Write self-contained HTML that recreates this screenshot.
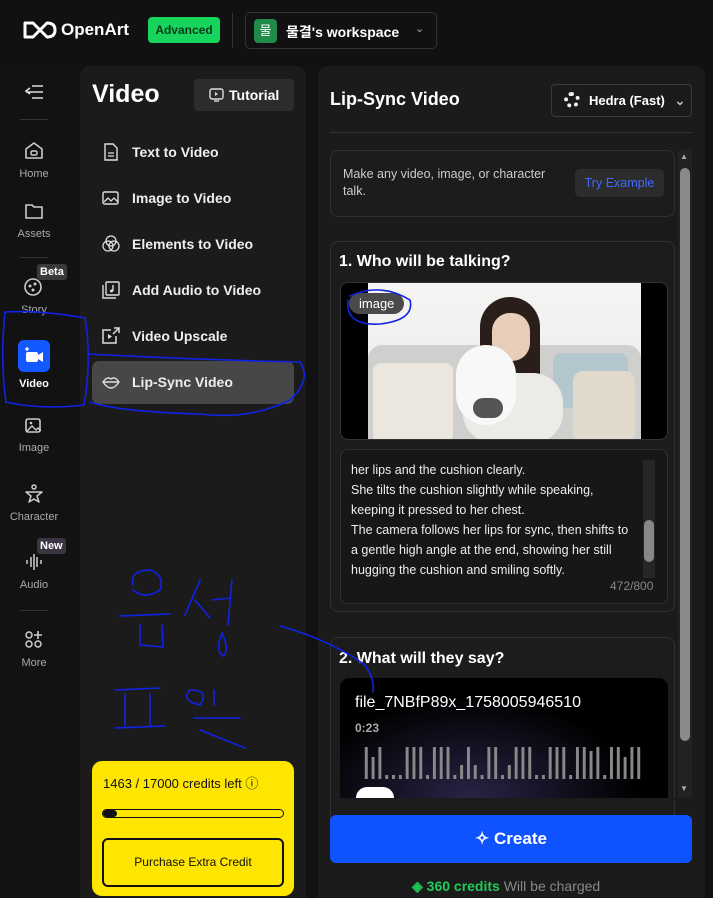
<!DOCTYPE html>
<html><head><meta charset="utf-8"><style>
*{box-sizing:border-box;margin:0;padding:0}
body{width:713px;height:898px;background:#111;font-family:"Liberation Sans","Noto Sans CJK KR",sans-serif;color:#fff;position:relative;overflow:hidden}
.abs{position:absolute}
.side{left:0;top:66px;width:80px;height:832px;background:#121212}
.nav{position:absolute;left:0;width:68px;text-align:center;font-size:11px;color:#aaa}
.nav svg{display:block;margin:0 auto 6px}
.menu{left:80px;top:66px;width:226px;height:832px;background:#1b1b1b;border-radius:10px 10px 0 0}
.mi{position:absolute;left:22px;font-size:14px;font-weight:bold;color:#eee;display:flex;align-items:center;gap:12px}
.right{left:318px;top:66px;width:387px;height:832px;background:#1b1b1b;border-radius:10px 10px 0 0}
.card{position:absolute;border:1px solid #303030;border-radius:8px;background:#1c1c1c}
</style></head><body>
<!-- top bar -->
<svg class="abs" style="left:23px;top:20px" width="34" height="20" viewBox="0 0 34 20"><path d="M2 3 L10 3 Q17 10 24 17 Q32 17 32 10 Q32 3 24 3 Q17 10 10 17 L2 17 Z" fill="none" stroke="#fff" stroke-width="3" stroke-linejoin="round"/></svg>
<div class="abs" style="left:61px;top:20px;font-size:17px;font-weight:bold">OpenArt</div>
<div class="abs" style="left:148px;top:17px;width:72px;height:26px;border-radius:4px;color:#0b3a1a;font-size:12px;font-weight:bold;text-align:center;line-height:26px;background:#17d45c">Advanced</div>
<div class="abs" style="left:232px;top:13px;width:1px;height:35px;background:#333"></div>
<div class="abs" style="left:245px;top:12px;width:192px;height:37px;border:1px solid #333;border-radius:5px"></div>
<div class="abs" style="left:254px;top:19px;width:23px;height:24px;background:#1f8a4a;border-radius:4px;font-size:13px;text-align:center;line-height:24px">물</div>
<div class="abs" style="left:286px;top:22px;font-size:14px;font-weight:bold">물결's workspace</div>
<div class="abs" style="left:415px;top:22px;font-size:11px;color:#aaa">⌄</div>

<!-- sidebar -->
<div class="abs side"></div>
<svg class="abs" style="left:24px;top:84px" width="20" height="16"><path d="M8 2h11M2 8h17M8 14h11M6 4 2 7 6 10" stroke="#ddd" stroke-width="1.6" fill="none"/></svg>
<div class="abs" style="left:20px;top:119px;width:28px;height:1px;background:#333"></div>
<div class="nav" style="top:140px"><svg width="22" height="22" viewBox="0 0 22 22"><path d="M3 9 11 3 19 9V18H3Z" fill="none" stroke="#ccc" stroke-width="1.6" stroke-linejoin="round"/><rect x="8" y="11" width="6" height="4" rx="1.5" fill="none" stroke="#ccc" stroke-width="1.5"/></svg>Home</div>
<div class="nav" style="top:200px"><svg width="22" height="22" viewBox="0 0 22 22"><path d="M3 5h6l2 2h8v11H3Z" fill="none" stroke="#ccc" stroke-width="1.6" stroke-linejoin="round"/></svg>Assets</div>
<div class="abs" style="left:20px;top:257px;width:28px;height:1px;background:#333"></div>
<div class="nav" style="top:276px"><svg width="22" height="22"><circle cx="10" cy="11" r="8" fill="none" stroke="#ccc" stroke-width="1.6"/><circle cx="7" cy="10" r="1.5" fill="#ccc"/><circle cx="12" cy="8" r="1.5" fill="#ccc"/><circle cx="10" cy="14" r="1.5" fill="#ccc"/></svg>Story</div>
<div class="abs" style="left:37px;top:264px;background:#3a3a3a;border-radius:3px;font-size:11px;font-weight:bold;padding:2px 3px">Beta</div>
<div class="abs" style="left:18px;top:340px;width:32px;height:32px;background:#1458ff;border-radius:6px"></div>
<svg class="abs" style="left:23px;top:346px" width="22" height="20"><rect x="3" y="6" width="12" height="10" rx="2" fill="#fff"/><path d="M15 9l5-3v10l-5-3z" fill="#fff"/><path d="M4 1v4M2 3h4" stroke="#fff" stroke-width="1.3"/></svg>
<div class="nav" style="top:378px;color:#fff;font-weight:bold">Video</div>
<div class="nav" style="top:414px"><svg width="22" height="22"><rect x="3" y="5" width="14" height="13" rx="2" fill="none" stroke="#ccc" stroke-width="1.6"/><path d="M4 17l5-5 4 4 2-2 3 3" fill="none" stroke="#ccc" stroke-width="1.4"/><circle cx="8" cy="9" r="1.3" fill="#ccc"/></svg>Image</div>
<div class="nav" style="top:483px"><svg width="22" height="22"><circle cx="11" cy="4" r="2" fill="none" stroke="#ccc" stroke-width="1.5"/><path d="M3 9h16l-5 4 2 6-5-3-5 3 2-6z" fill="none" stroke="#ccc" stroke-width="1.5" stroke-linejoin="round"/></svg>Character</div>
<div class="nav" style="top:551px"><svg width="22" height="22"><path d="M4 9v4M8 6v10M11 3v16M14 6v10M18 9v4" stroke="#ccc" stroke-width="1.5"/></svg>Audio</div>
<div class="abs" style="left:37px;top:538px;background:#3a3440;border-radius:3px;font-size:11px;font-weight:bold;padding:2px 3px">New</div>
<div class="abs" style="left:20px;top:610px;width:28px;height:1px;background:#333"></div>
<div class="nav" style="top:629px"><svg width="22" height="22"><circle cx="6" cy="6" r="3" fill="none" stroke="#ccc" stroke-width="1.5"/><circle cx="6" cy="15" r="3" fill="none" stroke="#ccc" stroke-width="1.5"/><circle cx="15" cy="15" r="3" fill="none" stroke="#ccc" stroke-width="1.5"/><path d="M15 2v8M11 6h8" stroke="#ccc" stroke-width="1.6"/></svg>More</div>

<!-- menu -->
<div class="abs menu"></div>
<div class="abs" style="left:92px;top:80px;font-size:25px;font-weight:bold">Video</div>
<div class="abs" style="left:194px;top:79px;width:100px;height:32px;background:#2c2c2c;border-radius:4px;font-size:14px;font-weight:bold;line-height:32px;padding-left:35px">Tutorial</div>
<svg class="abs" style="left:209px;top:88px" width="15" height="14"><rect x="1" y="1" width="13" height="10" rx="2" fill="none" stroke="#ddd" stroke-width="1.4"/><path d="M6 4l3 2-3 2z" fill="#ddd"/><path d="M5 13h5" stroke="#ddd" stroke-width="1.4"/></svg>
<div class="mi" style="left:102px;top:143px"><svg width="18" height="18"><path d="M3 1h8l4 4v12H3z" fill="none" stroke="#ddd" stroke-width="1.4"/><path d="M6 10h6M6 13h6" stroke="#ddd" stroke-width="1.3"/></svg>Text to Video</div>
<div class="mi" style="left:102px;top:189px"><svg width="18" height="18"><rect x="1" y="3" width="15" height="12" rx="1.5" fill="none" stroke="#ddd" stroke-width="1.4"/><path d="M2 13l4-4 3 3 3-3 4 4" fill="none" stroke="#ddd" stroke-width="1.3"/></svg>Image to Video</div>
<div class="mi" style="left:102px;top:235px"><svg width="18" height="18"><circle cx="9" cy="6" r="5" fill="none" stroke="#ddd" stroke-width="1.3"/><circle cx="6" cy="11" r="5" fill="none" stroke="#ddd" stroke-width="1.3"/><circle cx="12" cy="11" r="5" fill="none" stroke="#ddd" stroke-width="1.3"/></svg>Elements to Video</div>
<div class="mi" style="left:102px;top:281px"><svg width="18" height="18"><rect x="4" y="1" width="13" height="13" rx="1" fill="none" stroke="#ddd" stroke-width="1.4"/><path d="M1 4v13h13" fill="none" stroke="#ddd" stroke-width="1.4"/><path d="M11 4v6" stroke="#ddd" stroke-width="1.4"/><circle cx="9.5" cy="10" r="1.5" fill="#ddd"/></svg>Add Audio to Video</div>
<div class="mi" style="left:102px;top:327px"><svg width="18" height="18"><path d="M14 9v7H1V3h8" fill="none" stroke="#ddd" stroke-width="1.5"/><path d="M12 1h5v5M17 1l-6 6" fill="none" stroke="#ddd" stroke-width="1.5"/><path d="M6 7l4 2.5-4 2.5z" fill="#ddd"/></svg>Video Upscale</div>
<div class="abs" style="left:92px;top:361px;width:202px;height:43px;background:#474747;border-radius:7px"></div>
<div class="mi" style="left:102px;top:373px"><svg width="18" height="18"><path d="M1 9Q5 3 9 6Q13 3 17 9Q13 15 9 15Q5 15 1 9Z M2 9h14" fill="none" stroke="#ddd" stroke-width="1.4"/></svg>Lip-Sync Video</div>
<div class="abs" style="left:92px;top:761px;width:202px;height:135px;background:#ffe600;border-radius:10px"></div>
<div class="abs" style="left:103px;top:773px;font-size:13px;color:#111">1463 / 17000 credits left ⓘ</div>
<div class="abs" style="left:102px;top:809px;width:182px;height:9px;border:1px solid #111;border-radius:5px"><div style="width:14px;height:7px;background:#111;border-radius:4px"></div></div>
<div class="abs" style="left:102px;top:838px;width:182px;height:49px;border:2px solid #111;border-radius:6px;color:#111;font-size:12px;text-align:center;line-height:45px">Purchase Extra Credit</div>

<!-- right panel -->
<div class="abs right"></div>
<div class="abs" style="left:330px;top:89px;font-size:18px;font-weight:bold">Lip-Sync Video</div>
<div class="abs" style="left:551px;top:84px;width:141px;height:33px;border:1px solid #3a3a3a;border-radius:4px;font-size:13px;font-weight:bold;line-height:31px;padding-left:37px">Hedra (Fast) <span style="color:#bbb;margin-left:6px">⌄</span></div>
<div class="abs" style="left:564px;top:92px;width:16px;height:16px;border-radius:50%;border:4px dotted #eee"></div>
<div class="abs" style="left:330px;top:132px;width:362px;height:1px;background:#333"></div>
<div class="card" style="left:330px;top:150px;width:345px;height:67px"></div>
<div class="abs" style="left:343px;top:166px;font-size:12.5px;color:#ccc;line-height:17px;width:208px">Make any video, image, or character talk.</div>
<div class="abs" style="left:575px;top:169px;width:89px;height:28px;background:#2c2c2c;border-radius:5px;color:#3e6bff;font-size:12.5px;line-height:28px;text-align:center">Try Example</div>
<div class="card" style="left:330px;top:241px;width:345px;height:371px"></div>
<div class="abs" style="left:339px;top:253px;font-size:16px;font-weight:bold">1. Who will be talking?</div>
<div class="abs" style="left:340px;top:282px;width:328px;height:158px;background:#000;border-radius:8px;overflow:hidden;border:1px solid #333">
 <div style="position:absolute;left:27px;top:0;width:273px;height:158px;background:linear-gradient(#f4f4f2,#ebebea)">
  <div style="position:absolute;left:0;top:62px;width:273px;height:100px;background:#cfd0ce;border-radius:14px 14px 0 0"></div>
  <div style="position:absolute;left:5px;top:80px;width:80px;height:80px;background:#ece7de;border-radius:8px"></div>
  <div style="position:absolute;left:185px;top:70px;width:75px;height:55px;background:#b4c7ce;border-radius:8px"></div>
  <div style="position:absolute;left:205px;top:88px;width:62px;height:72px;background:#e2d9cd;border-radius:10px"></div>
  <div style="position:absolute;left:112px;top:14px;width:60px;height:110px;background:#2a1e1a;border-radius:30px 30px 10px 10px"></div>
  <div style="position:absolute;left:124px;top:30px;width:38px;height:48px;background:#e8cdb9;border-radius:18px"></div>
  <div style="position:absolute;left:95px;top:90px;width:100px;height:70px;background:#ecebe8;border-radius:30px"></div>
  <div style="position:absolute;left:88px;top:62px;width:60px;height:80px;background:#f8f8f8;border-radius:30px"></div>
  <div style="position:absolute;left:105px;top:115px;width:30px;height:20px;background:#555;border-radius:12px"></div>
 </div>
 <div style="position:absolute;left:8px;top:10px;background:#4a4a4a;border-radius:12px;font-size:13px;padding:3px 10px">image</div>
</div>
<div class="card" style="left:340px;top:449px;width:328px;height:155px;background:#171717"></div>
<div class="abs" style="left:351px;top:460px;font-size:12.5px;line-height:20px;color:#eee;width:300px">her lips and the cushion clearly.<br>She tilts the cushion slightly while speaking,<br>keeping it pressed to her chest.<br>The camera follows her lips for sync, then shifts to<br>a gentle high angle at the end, showing her still<br>hugging the cushion and smiling softly.</div>
<div class="abs" style="left:643px;top:460px;width:12px;height:118px;background:#262626"></div>
<div class="abs" style="left:644px;top:520px;width:10px;height:42px;background:#888;border-radius:5px"></div>
<div class="abs" style="left:610px;top:579px;font-size:12px;color:#888">472/800</div>
<div class="card" style="left:330px;top:637px;width:345px;height:200px"></div>
<div class="abs" style="left:339px;top:650px;font-size:16px;font-weight:bold">2. What will they say?</div>
<div class="abs" style="left:340px;top:678px;width:328px;height:120px;background:radial-gradient(ellipse at 40% 100%,#2a2346,#000 60%);border-radius:10px 10px 0 0"></div>
<div class="abs" style="left:355px;top:694px;font-size:16px">file_7NBfP89x_1758005946510</div>
<div class="abs" style="left:355px;top:721px;font-size:12px;color:#aaa;font-weight:bold">0:23</div>
<svg class="abs" style="left:364px;top:745px" width="277" height="34" viewBox="0 0 244 34" preserveAspectRatio="none"><g stroke="#888" stroke-width="2.6">
<path d="M2 2v32M8 12v22M14 2v32M20 30v4M26 30v4M32 30v4M38 2v32M44 2v32M50 2v32M56 30v4M62 2v32M68 2v32M74 2v32M80 30v4M86 20v14M92 2v32M98 20v14M104 30v4M110 2v32M116 2v32M122 30v4M128 20v14M134 2v32M140 2v32M146 2v32M152 30v4M158 30v4M164 2v32M170 2v32M176 2v32M182 30v4M188 2v32M194 2v32M200 6v28M206 2v32M212 30v4M218 2v32M224 2v32M230 12v22M236 2v32M242 2v32"/></g></svg>
<div class="abs" style="left:356px;top:787px;width:38px;height:11px;background:#fff;border-radius:19px 19px 0 0"></div>
<div class="abs" style="left:342px;top:798px;width:350px;height:3px;background:#1b1b1b"></div>
<!-- outer scrollbar -->
<div class="abs" style="left:678px;top:150px;width:14px;height:648px;background:#222"></div>
<div class="abs" style="left:680px;top:168px;width:10px;height:573px;background:#8a8a8a;border-radius:5px"></div>
<div class="abs" style="left:680px;top:152px;font-size:8px;color:#aaa">▲</div>
<div class="abs" style="left:680px;top:784px;font-size:8px;color:#aaa">▼</div>
<div class="abs" style="left:330px;top:815px;width:362px;height:48px;background:#0f52ff;border-radius:6px;font-size:17px;font-weight:bold;text-align:center;line-height:48px">✧ Create</div>
<div class="abs" style="left:412px;top:878px;font-size:14px;color:#1ecb5a;font-weight:bold">◈ 360 credits <span style="color:#888;font-weight:normal">Will be charged</span></div>

<!-- annotations -->
<svg class="abs" style="left:0;top:0" width="713" height="898"><g fill="none" stroke="#1022e6" stroke-width="1.6" stroke-linecap="round">
<path d="M5 312Q40 310 85 318Q92 360 84 405Q40 410 6 402Q0 360 5 312Z"/>
<path d="M88 354Q200 360 300 362Q312 380 290 400Q250 420 200 414Q120 412 90 402"/>
<path d="M350 296Q380 282 410 300Q415 320 380 324Q345 326 348 300"/>
<path d="M280 626Q330 640 365 665Q375 680 373 692"/>
<path d="M133 585Q130 570 150 570Q165 575 160 590Q145 600 133 590M120 616L170 614M140 624L140 645L163 647L162 625M200 580L185 615M195 600L210 618M232 580L228 625M212 600L230 598M222 633Q215 650 223 656Q230 650 222 633"/>
<path d="M115 690L160 688M125 694L125 726M150 694L150 726M115 728L165 726M190 690Q180 700 200 705Q210 690 190 690M214 690L214 705M194 718L240 718M200 730L245 748"/>
</g></svg>
</body></html>
